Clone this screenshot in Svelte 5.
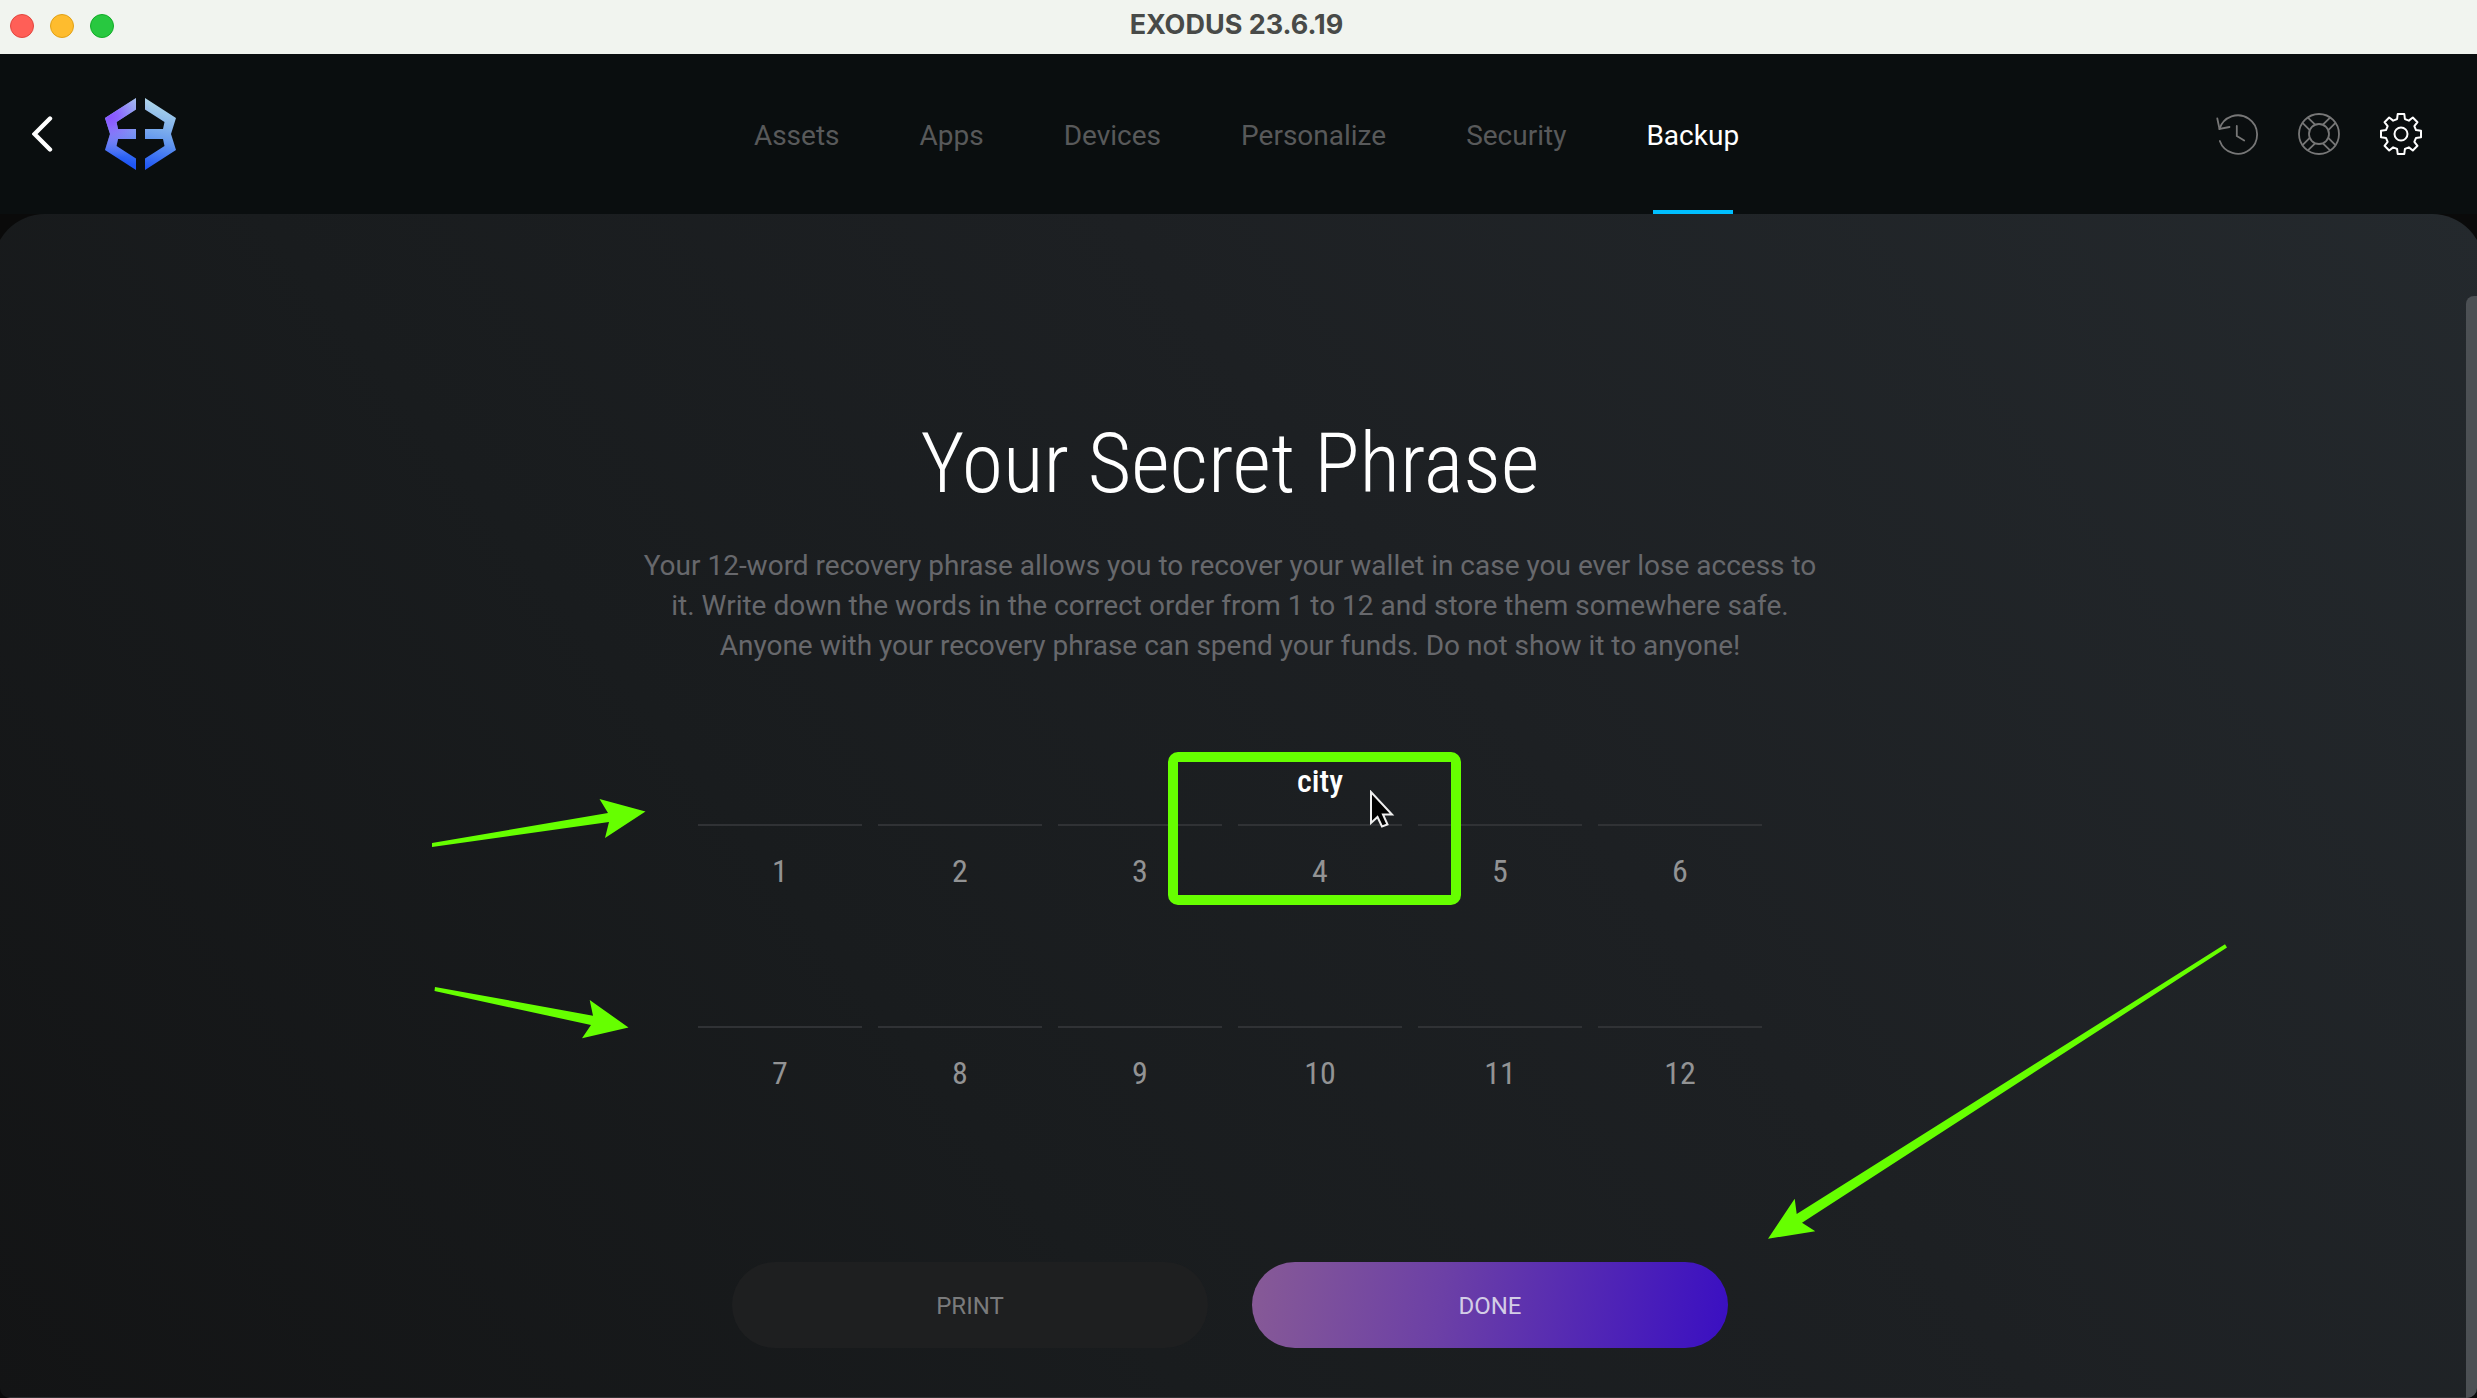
<script>
  const tabs = ['Assets', 'Apps', 'Devices', 'Personalize', 'Security', 'Backup'];
  let active = $state('Backup');
  let hovered = $state(4);
  const words = { 4: 'city' };
  const slots = Array.from({ length: 12 }, (_, i) => i + 1);

  // Outline of an eight-toothed cog centred on 0,0.
  const cog = Array.from({ length: 8 }, (_, i) => {
    const a = (i * Math.PI) / 4;
    return [[-5.8, -14.2], [-3.9, -15], [-3.3, -20], [3.3, -20], [3.9, -15], [5.8, -14.2]]
      .map(([x, y]) => `${(x * Math.cos(a) - y * Math.sin(a)).toFixed(2)},${(x * Math.sin(a) + y * Math.cos(a)).toFixed(2)}`)
      .join(' ');
  }).join(' ');
  const spokes = [45, 135, 225, 315];
</script>

<div class="window">
  <div class="titlebar">
    <div class="lights">
      <button class="light close" aria-label="Close"></button>
      <button class="light minimise" aria-label="Minimise"></button>
      <button class="light zoom" aria-label="Zoom"></button>
    </div>
    <div class="app-name">EXODUS 23.6.19</div>
  </div>

  <header>
    <div class="start">
      <button class="icon back" aria-label="Back">
        <svg width="24" height="40" viewBox="0 0 24 40"><path d="M18 4.500 2.500 20 18 35.500" fill="none" stroke="#fff" stroke-width="4.400" stroke-linecap="round" /></svg>
      </button>
      <a class="logo" href="#home" aria-label="Exodus home">
        <svg width="72" height="72" viewBox="0 0 72 72">
          <defs>
            <linearGradient id="base" x1="50" y1="0" x2="34" y2="72" gradientUnits="userSpaceOnUse">
              <stop offset="0" stop-color="#b4dbe8" />
              <stop offset="0.5" stop-color="#6da0ee" />
              <stop offset="0.95" stop-color="#1f56f5" />
            </linearGradient>
            <radialGradient id="violet" cx="5" cy="19" r="42" gradientUnits="userSpaceOnUse">
              <stop offset="0" stop-color="#8a55ff" />
              <stop offset="0.2" stop-color="#8c60ff" stop-opacity="0.95" />
              <stop offset="1" stop-color="#a59cf5" stop-opacity="0" />
            </radialGradient>
            <path id="mark" d="M31 0 0 20l5 16-5 16 31 20V60.500L11.500 48l1.500-7H31V31H13l-1.500-7L31 11.500ZM40 0l31 20-5 16 5 16-31 20V60.500L59.500 48 58 41H40V31h18l1.500-7L40 11.500Z" />
          </defs>
          <use href="#mark" fill="url(#base)" />
          <use href="#mark" fill="url(#violet)" />
        </svg>
      </a>
    </div>

    <nav>
      {#each tabs as tab}
        <a href="#{tab.toLowerCase()}" class:active={active === tab} onclick={() => (active = tab)}>{tab}</a>
      {/each}
    </nav>

    <div class="tools">
      <button class="icon" aria-label="History">
        <svg width="42" height="42" viewBox="0 0 42 42" fill="none" stroke="#777" stroke-width="1.800" stroke-linecap="round">
          <path d="M3.500 16A19.200 19.200 0 1 1 3.800 28" />
          <path d="M1.300 5.500 3.500 16 13.500 14M20.800 13v10l7.400 4.500" />
        </svg>
      </button>
      <button class="icon" aria-label="Support">
        <svg width="42" height="42" viewBox="-21 -21 42 42" fill="none" stroke="#777" stroke-width="1.800">
          <circle r="20" /><circle r="10" />
          {#each spokes as angle}
            <path d="M-3.800-19.500V-9.300M3.800-19.500V-9.300" transform="rotate({angle})" />
          {/each}
        </svg>
      </button>
      <button class="icon" aria-label="Settings">
        <svg width="42" height="42" viewBox="-21 -21 42 42" fill="none" stroke="#fff" stroke-width="2" stroke-linejoin="round">
          <polygon points={cog} /><circle r="6.500" />
        </svg>
      </button>
    </div>
  </header>

  <div class="stage">
    <main>
      <h1>Your Secret Phrase</h1>
      <p>Your 12-word recovery phrase allows you to recover your wallet in case you ever lose access to it. Write down the words in the correct order from 1 to 12 and store them somewhere safe. Anyone with your recovery phrase can spend your funds. Do not show it to anyone!</p>

      <ol>
        {#each slots as n}
          <li onpointerenter={() => (hovered = n)}>
            <span class="word">{hovered === n ? (words[n] ?? '') : ''}</span>
            <span class="number">{n}</span>
            {#if n === 4}
              <span class="highlight"></span>
              <svg class="cursor" width="26" height="40" viewBox="0 0 26 40">
                <path d="M2 2v31l6.500-6 4.500 9.500 5.500-2-4.500-10H23Z" fill="#000" stroke="#eee" stroke-width="2" />
              </svg>
            {/if}
          </li>
        {/each}
      </ol>

      <div class="actions">
        <button class="print">PRINT</button>
        <button class="done">DONE</button>
      </div>

      <svg class="arrows" width="1796" height="300" viewBox="432 799 1796 300" fill="#6f0">
        <path d="M432 843 608 813 599.500 799 645.500 811.500 605 838 609 822 432 847Z" />
        <path d="M435 987 593 1015.700 589.700 1000 628.500 1027.500 582 1038.300 591 1025 434.500 991Z" />
        <path d="M2225 944.300 1796.700 1214 1794.700 1198.700 1768 1238.700 1815.300 1231.300 1802 1222.700 2227 947.500Z" />
      </svg>
    </main>
    <div class="thumb"></div>
  </div>
</div>

<style>
  :global(body) {
    margin: 0;
    background: #0a0a0a;
  }

  .window {
    min-height: 100vh;
    display: flex;
    flex-direction: column;
    font-family: Roboto, 'Liberation Sans', sans-serif;
    color: #fff;
  }

  button {
    font: inherit;
    border: 0;
    padding: 0;
    background: none;
    cursor: pointer;
  }

  svg {
    display: block;
  }

  .titlebar {
    height: 54px;
    padding: 0 10px;
    box-sizing: border-box;
    display: grid;
    grid-template-columns: 1fr auto 1fr;
    align-items: center;
    background: #f1f4ef;
  }

  .lights {
    display: flex;
    gap: 16px;
    padding-bottom: 2px;
  }

  .light {
    width: 24px;
    height: 24px;
    border-radius: 50%;
    border: 1px solid;
  }

  .close {
    background: #ff5f57;
    border-color: #e2463f;
  }

  .minimise {
    background: #febc2e;
    border-color: #e1a116;
  }

  .zoom {
    background: #28c840;
    border-color: #12ac28;
  }

  .app-name {
    font: 700 27px/32px Inter, sans-serif;
    color: #484a48;
    padding: 0 4px 4px 0;
  }

  header {
    height: 160px;
    padding: 0 16px 0 32px;
    box-sizing: border-box;
    display: grid;
    grid-template-columns: 1fr auto 1fr;
    align-items: center;
    background: #0a0e0f;
  }

  .start {
    display: flex;
    align-items: center;
    gap: 49px;
  }

  nav {
    height: 160px;
    display: flex;
    gap: 80px;
  }

  nav a {
    display: flex;
    align-items: center;
    position: relative;
    padding-top: 3px;
    font-size: 28px;
    line-height: 36px;
    color: #58595a;
    text-decoration: none;
  }

  nav a.active {
    color: #fff;
  }

  nav a.active::after {
    content: '';
    position: absolute;
    bottom: 0;
    left: calc(50% - 40px);
    width: 80px;
    height: 4px;
    background: #00bfff;
  }

  .tools {
    display: flex;
    justify-content: flex-end;
    padding-right: 19px;
  }

  .tools .icon {
    padding: 20px;
  }

  .stage {
    flex: 1;
    position: relative;
    display: flex;
    flex-direction: column;
    border-radius: 0 0 10px 10px;
    overflow: hidden;
  }

  /* The panel runs a little past both window edges, so its round corners are cut. */
  .stage::before {
    content: '';
    position: absolute;
    inset: 0 -7px;
    border-radius: 52px 52px 0 0;
    border-bottom: 1px solid #303234;
    background: linear-gradient(52deg, #131415 0%, #191c1e 35%, #1d2023 60%, #24292d 100%);
  }

  main {
    flex: 1;
    position: relative;
    padding: 200px 17px 50px 0;
    display: flex;
    flex-direction: column;
    align-items: center;
  }

  h1 {
    margin: 0;
    font: 300 84px/100px 'Roboto Condensed', Roboto, sans-serif;
  }

  p {
    margin: 32px 0 0;
    max-width: 1200px;
    text-align: center;
    font-size: 28px;
    line-height: 40px;
    color: #67686c;
  }

  ol {
    list-style: none;
    margin: 95px 0 0;
    padding: 0;
    width: 1064px;
    display: grid;
    grid-template-columns: repeat(6, 1fr);
    gap: 72px 16px;
    text-align: center;
    font: 500 32px/40px 'Roboto Condensed', Roboto, sans-serif;
  }

  li {
    position: relative;
    display: flex;
    flex-direction: column;
    gap: 25px;
  }

  .word {
    height: 40px;
    padding-bottom: 23px;
    border-bottom: 2px solid #303235;
  }

  .number {
    font-weight: 400;
    color: #929394;
  }

  .highlight {
    position: absolute;
    z-index: 1;
    top: -9px;
    left: -70px;
    width: 273px;
    height: 133px;
    border: 10px solid #6f0;
    border-radius: 10px;
    pointer-events: none;
  }

  .cursor {
    position: absolute;
    top: 29px;
    left: 131px;
  }

  .actions {
    margin-top: 169px;
    display: flex;
    gap: 44px;
  }

  .actions button {
    width: 476px;
    height: 86px;
    border-radius: 43px;
    padding-top: 2px;
    font-size: 24px;
    line-height: 32px;
  }

  .print {
    background: #1e1f20;
    color: #7a7b7c;
  }

  .done {
    background: linear-gradient(98deg, #875a96 0%, #6c40a6 40%, #3a0fc2 100%);
    color: #d3cde6;
  }

  .arrows {
    position: absolute;
    overflow: visible;
    top: 585px;
    left: calc(50% - 807px);
    pointer-events: none;
  }

  .thumb {
    position: absolute;
    top: 82px;
    right: 0;
    bottom: 0;
    width: 11px;
    border-radius: 8px 0 0 0;
    background: #4c5054;
  }
</style>
